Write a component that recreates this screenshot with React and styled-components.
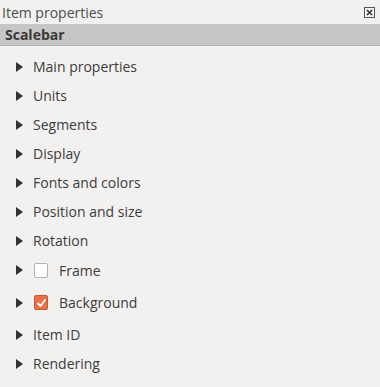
import styled, { createGlobalStyle } from "styled-components";

const GlobalStyle = createGlobalStyle`
    html, body {
        margin: 0;
        padding: 0;
        background: #f2f1f0;
    }
    body {
        font-family: "Open Sans", "DejaVu Sans", sans-serif;
    }
`;

const Panel = styled.div`
    width: 380px;
    height: 387px;
    background: #f2f1f0;
    color: #3c3c3c;
    overflow: hidden;
`;

const TitleBar = styled.div`
    display: flex;
    align-items: center;
    justify-content: space-between;
    height: 24px;
    padding: 0 3px 0 2px;
    font-size: 14px;
    color: #4d4d4d;
    .close {
        width: 11px;
        height: 11px;
        margin-right: 2px;
    }
`;

const SectionHeader = styled.div`
    height: 21px;
    display: flex;
    align-items: center;
    padding-left: 5px;
    background: #c6c6c6;
    border-bottom: 1px solid #b4b4b4;
    font-size: 14px;
    font-weight: 700;
    color: #3a3a3a;
`;

const List = styled.div`
    display: flex;
    flex-direction: column;
    padding-top: 6px;
`;

const Row = styled.div`
    display: flex;
    align-items: center;
    height: ${(p) => p.$h || 29}px;
    padding-left: 16px;
    font-size: 14px;
    color: #3c3c3c;
`;

const Arrow = styled.span`
    width: 0;
    height: 0;
    border-top: 5px solid transparent;
    border-bottom: 5px solid transparent;
    border-left: 7px solid #333333;
    margin-right: 10px;
`;

const Check = styled.span`
    box-sizing: border-box;
    width: 14px;
    height: 15px;
    border-radius: 2px;
    margin: 0 11px 0 1px;
    display: flex;
    align-items: center;
    justify-content: center;
    border: 1px solid ${(p) => (p.$on ? "#c8582c" : "#b3b3b3")};
    background: ${(p) => (p.$on ? "#e9714a" : "#ffffff")};
`;

const items = [
    { label: "Main properties" },
    { label: "Units" },
    { label: "Segments" },
    { label: "Display" },
    { label: "Fonts and colors" },
    { label: "Position and size" },
    { label: "Rotation" },
    { label: "Frame", check: false, h: 30 },
    { label: "Background", check: true, h: 35 },
    { label: "Item ID" },
    { label: "Rendering" },
];

export default function App() {
    return (
        <>
            <GlobalStyle />
            <Panel>
                <TitleBar>
                    <span>Item properties</span>
                    <svg className="close" viewBox="0 0 11 11">
                        <rect x="0.5" y="0.5" width="10" height="10" fill="none" stroke="#555" />
                        <path d="M3 3 L8 8 M8 3 L3 8" stroke="#333" strokeWidth="1.6" />
                    </svg>
                </TitleBar>
                <SectionHeader>Scalebar</SectionHeader>
                <List>
                    {items.map((it) => (
                        <Row key={it.label} $h={it.h}>
                            <Arrow />
                            {it.check !== undefined ? (
                                <Check $on={it.check}>
                                    {it.check ? (
                                        <svg width="11" height="10" viewBox="0 0 11 10">
                                            <path d="M1.5 5 L4.5 8 L9.5 1.5" fill="none" stroke="#ffffff" strokeWidth="1.8" />
                                        </svg>
                                    ) : null}
                                </Check>
                            ) : null}
                            <span>{it.label}</span>
                        </Row>
                    ))}
                </List>
            </Panel>
        </>
    );
}
